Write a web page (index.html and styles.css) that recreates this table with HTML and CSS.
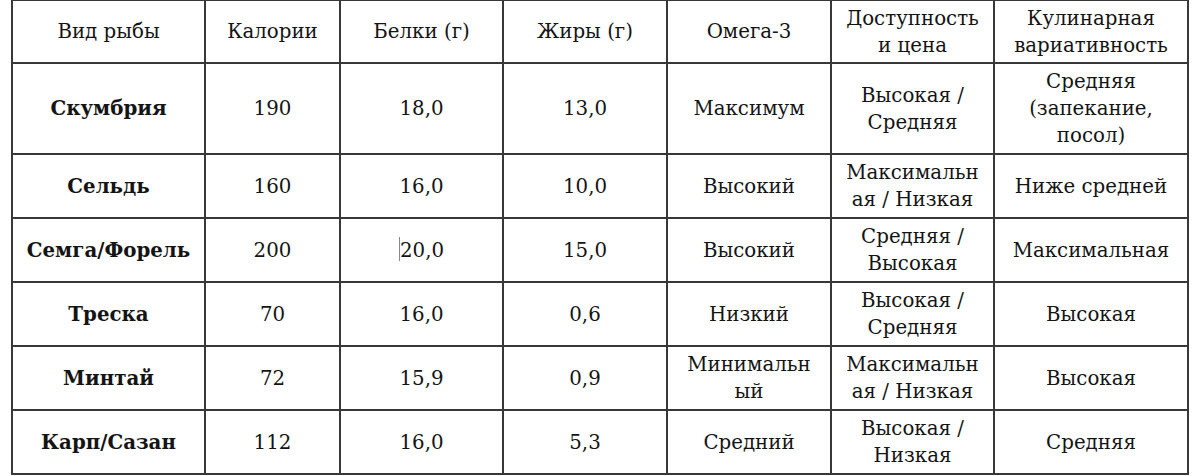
FILE: index.html
```html
<!DOCTYPE html>
<html lang="ru">
<head>
<meta charset="utf-8">
<title>Сравнение рыбы</title>
<link rel="stylesheet" href="styles.css">
</head>
<body>
<table class="fish">
  <colgroup>
    <col class="c1"><col class="c2"><col class="c3"><col class="c4"><col class="c5"><col class="c6"><col class="c7">
  </colgroup>
  <tr class="head">
    <td>Вид рыбы</td><td>Калории</td><td>Белки (г)</td><td>Жиры (г)</td><td>Омега-3</td><td>Доступность<br>и цена</td><td>Кулинарная<br>вариативность</td>
  </tr>
  <tr class="r1">
    <td class="name">Скумбрия</td><td>190</td><td>18,0</td><td>13,0</td><td>Максимум</td><td>Высокая /<br>Средняя</td><td>Средняя<br>(запекание,<br>посол)</td>
  </tr>
  <tr class="r">
    <td class="name">Сельдь</td><td>160</td><td>16,0</td><td>10,0</td><td>Высокий</td><td>Максимальн<br>ая / Низкая</td><td>Ниже средней</td>
  </tr>
  <tr class="r">
    <td class="name">Семга/Форель</td><td>200</td><td><span class="caret"></span>20,0</td><td>15,0</td><td>Высокий</td><td>Средняя /<br>Высокая</td><td>Максимальная</td>
  </tr>
  <tr class="r">
    <td class="name">Треска</td><td>70</td><td>16,0</td><td>0,6</td><td>Низкий</td><td>Высокая /<br>Средняя</td><td>Высокая</td>
  </tr>
  <tr class="r">
    <td class="name">Минтай</td><td>72</td><td>15,9</td><td>0,9</td><td>Минимальн<br>ый</td><td>Максимальн<br>ая / Низкая</td><td>Высокая</td>
  </tr>
  <tr class="r">
    <td class="name">Карп/Сазан</td><td>112</td><td>16,0</td><td>5,3</td><td>Средний</td><td>Высокая /<br>Низкая</td><td>Средняя</td>
  </tr>
</table>
</body>
</html>
```

FILE: styles.css
```css
html, body {
  margin: 0;
  padding: 0;
  background: #ffffff;
}
body {
  padding-left: 11px;
  font-family: "DejaVu Serif", "Liberation Serif", serif;
  color: #141414;
}
.fish {
  border-collapse: collapse;
  table-layout: fixed;
  width: 1178px;
  margin-top: -1px;
  font-size: 19.8px;
  line-height: 27px;
}
.c1 { width: 193px; }
.c2 { width: 135px; }
.c3 { width: 163px; }
.c4 { width: 164px; }
.c5 { width: 164px; }
.c6 { width: 163px; }
.c7 { width: 194px; }
.fish td {
  border: 2px solid #383838;
  text-align: center;
  vertical-align: middle;
  padding: 0;
  white-space: nowrap;
}
.head td { height: 61px; }
.r1 td { height: 89px; }
.r td { height: 62px; }
.fish td.name {
  font-weight: bold;
}
.caret {
  display: inline-block;
  width: 0;
  height: 24px;
  border-left: 1px solid #888;
  vertical-align: middle;
  margin-top: -4px;
}
```
